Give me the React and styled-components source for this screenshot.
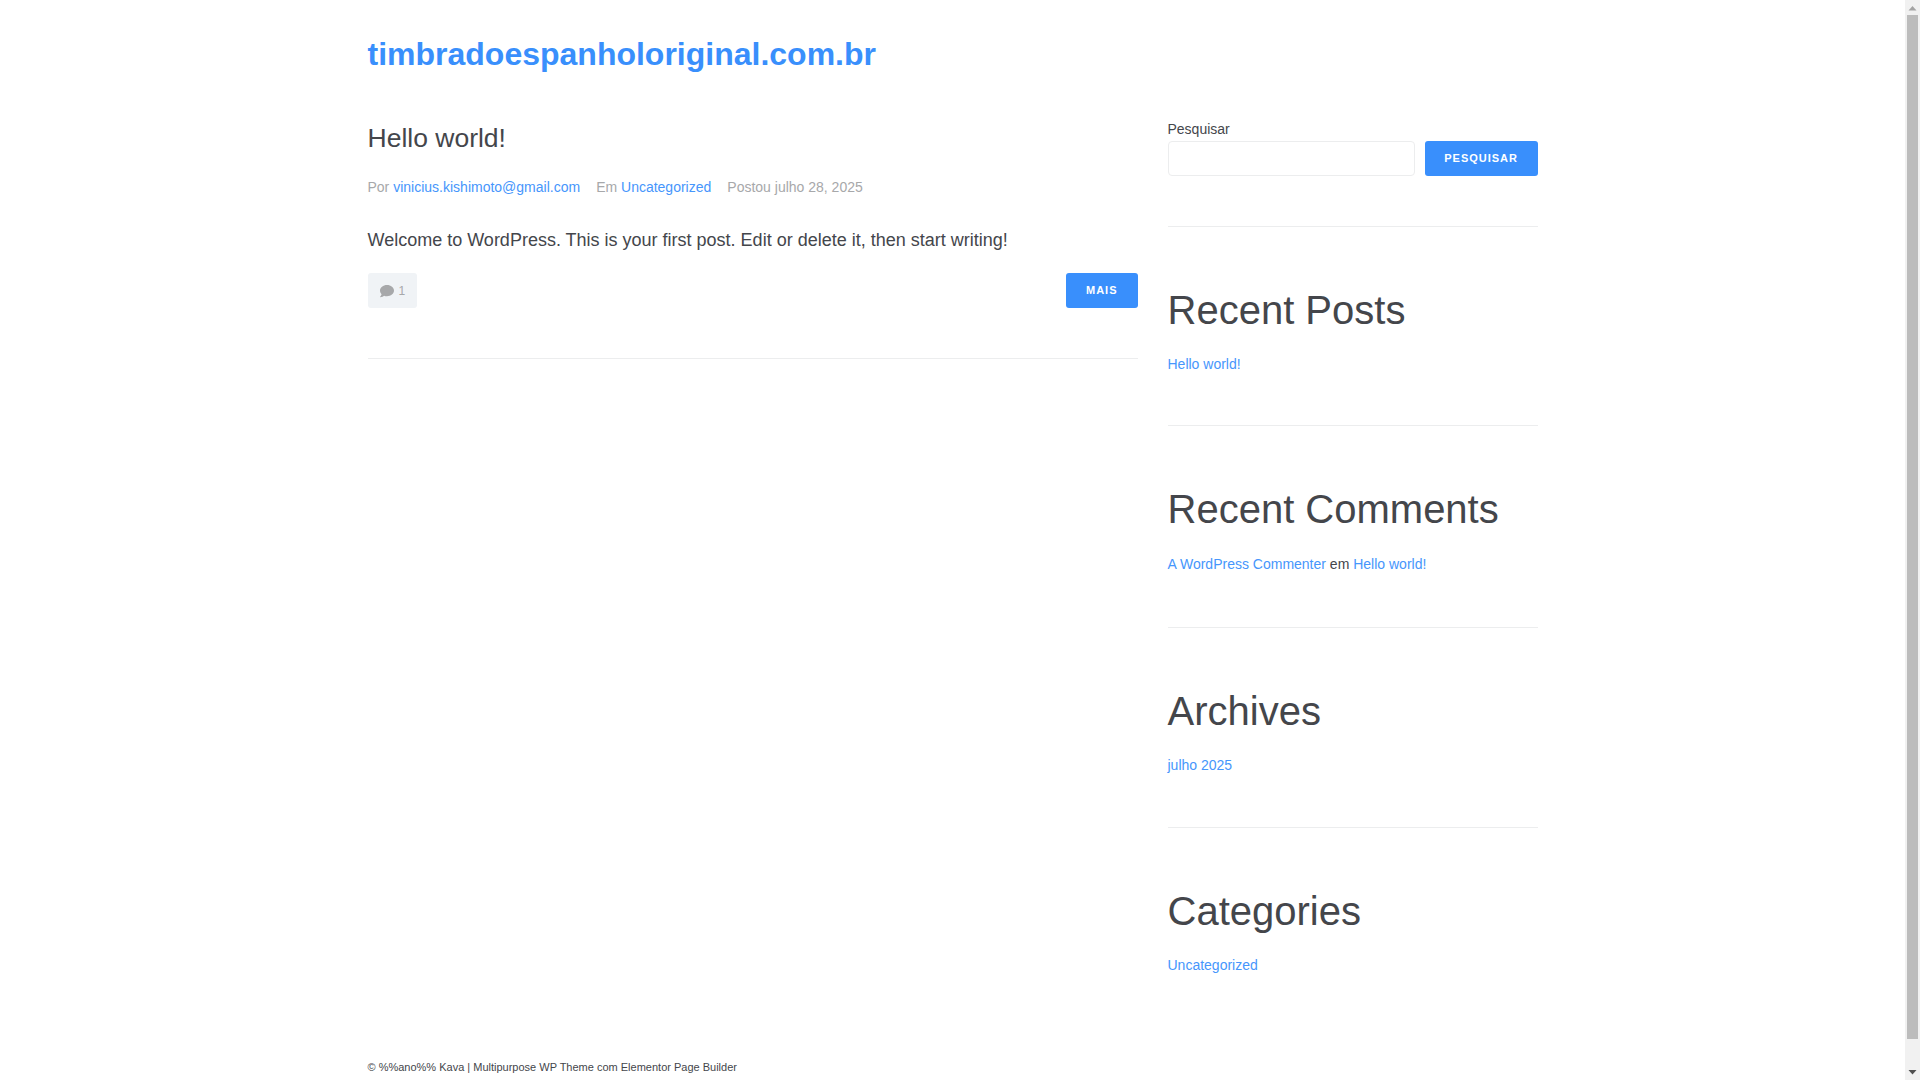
import styled, { createGlobalStyle } from "styled-components";
import { FaComment } from "react-icons/fa";

const GlobalStyle = createGlobalStyle`
  body {
    margin: 0;
    background: #fff;
    color: #44464b;
    font-family: "Liberation Sans", Arial, sans-serif;
    font-size: 14px;
    line-height: 1.6;
  }
`;

const Shell = styled.div`
  display: flex;
  height: 100vh;
  overflow: hidden;
`;

const Content = styled.div`
  flex: 1;
  min-width: 0;
`;

const Page = styled.div`
  width: 1170px;
  margin: 0 auto;
`;

const ScrollTrack = styled.div`
  display: flex;
  flex-direction: column;
  align-items: center;
  flex: 0 0 15px;
  background: #f1f1f1;
`;

const ScrollArrow = styled.svg`
  flex: 0 0 15px;
  width: 15px;
  height: 15px;
  fill: ${(p) => p.$color};
  margin-top: ${(p) => (p.$bottom ? "auto" : "0")};
`;

const ScrollThumb = styled.div`
  width: 11px;
  height: 1024px;
  background: #bcbcbc;
`;

const Header = styled.header`
  height: 108px;
  padding-top: 28px;
  box-sizing: border-box;
`;

const SiteTitle = styled.a`
  display: block;
  color: #398ffc;
  font-size: 32px;
  font-weight: 700;
  line-height: 52px;
  text-decoration: none;
`;

const Columns = styled.div`
  display: grid;
  grid-template-columns: 770px 370px;
  column-gap: 30px;
  height: 950px;
`;

const Post = styled.article`
  height: 250px;
  border-bottom: 1px solid #ecedee;
`;

const PostTitle = styled.h2`
  margin: 0;
  padding-top: 12px;
  font-size: 26.5px;
  font-weight: 400;
  line-height: 36px;
`;

const Meta = styled.div`
  display: flex;
  gap: 16px;
  margin-top: 20px;
  color: #a7a8aa;
  font-size: 14px;
  line-height: 22px;
`;

const Link = styled.a`
  color: #4696fc;
  text-decoration: none;
`;

const Excerpt = styled.p`
  margin: 28px 0 0;
  font-size: 18px;
  line-height: 29px;
`;

const PostFooter = styled.div`
  display: flex;
  justify-content: space-between;
  margin-top: 18px;
`;

const CommentBadge = styled.a`
  display: flex;
  align-items: center;
  gap: 5px;
  height: 35px;
  padding: 0 12px;
  box-sizing: border-box;
  border-radius: 3px;
  background: #f0f3f6;
  color: #a7a8aa;
  font-size: 12px;
  svg {
    width: 14px;
    height: 14px;
  }
`;

const CommentCount = styled.span`
  padding-top: 3px;
`;

const Button = styled.button`
  height: 35px;
  padding: 0 ${(p) => p.$pad}px 1px;
  border: 0;
  border-radius: 3px;
  background: #398ffc;
  color: #fff;
  font-family: "Liberation Sans", Arial, sans-serif;
  font-size: 11px;
  font-weight: 700;
  letter-spacing: 1px;
`;

const Sidebar = styled.aside`
  display: flex;
  flex-direction: column;
`;

const SearchLabel = styled.label`
  display: block;
  padding-top: 10px;
  line-height: 22px;
`;

const SearchRow = styled.div`
  display: flex;
  gap: 10px;
  margin: 1px 0 50px;
`;

const SearchInput = styled.input`
  flex: 1;
  min-width: 0;
  height: 35px;
  box-sizing: border-box;
  border: 1px solid #ecedee;
  border-radius: 4px;
  background: #fff;
`;

const Widget = styled.section`
  height: ${(p) => p.$height}px;
  border-top: 1px solid #ecedee;
  box-sizing: border-box;
`;

const WidgetTitle = styled.h2`
  margin: 0;
  padding-top: 58px;
  font-size: 40px;
  font-weight: 400;
  line-height: 50px;
`;

const WidgetBody = styled.div`
  margin-top: ${(p) => p.$top || 18}px;
  line-height: 22px;
`;

const Footer = styled.footer`
  font-size: 11px;
  line-height: 18px;
`;

export default function App() {
  return (
    <Shell>
      <GlobalStyle />
      <Content>
        <Page>
          <Header>
            <SiteTitle href="#">timbradoespanholoriginal.com.br</SiteTitle>
          </Header>
          <Columns>
            <main>
              <Post>
                <PostTitle>Hello world!</PostTitle>
                <Meta>
                  <span>
                    Por <Link href="#">vinicius.kishimoto@gmail.com</Link>
                  </span>
                  <span>
                    Em <Link href="#">Uncategorized</Link>
                  </span>
                  <span>Postou julho 28, 2025</span>
                </Meta>
                <Excerpt>
                  Welcome to WordPress. This is your first post. Edit or delete
                  it, then start writing!
                </Excerpt>
                <PostFooter>
                  <CommentBadge>
                    <FaComment />
                    <CommentCount>1</CommentCount>
                  </CommentBadge>
                  <Button $pad={20}>MAIS</Button>
                </PostFooter>
              </Post>
            </main>
            <Sidebar>
              <SearchLabel>Pesquisar</SearchLabel>
              <SearchRow>
                <SearchInput />
                <Button $pad={19.5}>PESQUISAR</Button>
              </SearchRow>
              <Widget $height={199}>
                <WidgetTitle>Recent Posts</WidgetTitle>
                <WidgetBody>
                  <Link href="#">Hello world!</Link>
                </WidgetBody>
              </Widget>
              <Widget $height={202}>
                <WidgetTitle>Recent Comments</WidgetTitle>
                <WidgetBody $top={19}>
                  <Link href="#">A WordPress Commenter</Link> em{" "}
                  <Link href="#">Hello world!</Link>
                </WidgetBody>
              </Widget>
              <Widget $height={200}>
                <WidgetTitle>Archives</WidgetTitle>
                <WidgetBody>
                  <Link href="#">julho 2025</Link>
                </WidgetBody>
              </Widget>
              <Widget $height={199}>
                <WidgetTitle>Categories</WidgetTitle>
                <WidgetBody>
                  <Link href="#">Uncategorized</Link>
                </WidgetBody>
              </Widget>
            </Sidebar>
          </Columns>
          <Footer>
            © %%ano%% Kava | Multipurpose WP Theme com Elementor Page Builder
          </Footer>
        </Page>
      </Content>
      <ScrollTrack>
        <ScrollArrow viewBox="0 0 15 15" $color="#a3a3a3">
          <path d="M7.5 6 L11.5 10.5 H3.5 Z" />
        </ScrollArrow>
        <ScrollThumb />
        <ScrollArrow viewBox="0 0 15 15" $color="#505050" $bottom>
          <path d="M3.5 5 H11.5 L7.5 9.5 Z" />
        </ScrollArrow>
      </ScrollTrack>
    </Shell>
  );
}
